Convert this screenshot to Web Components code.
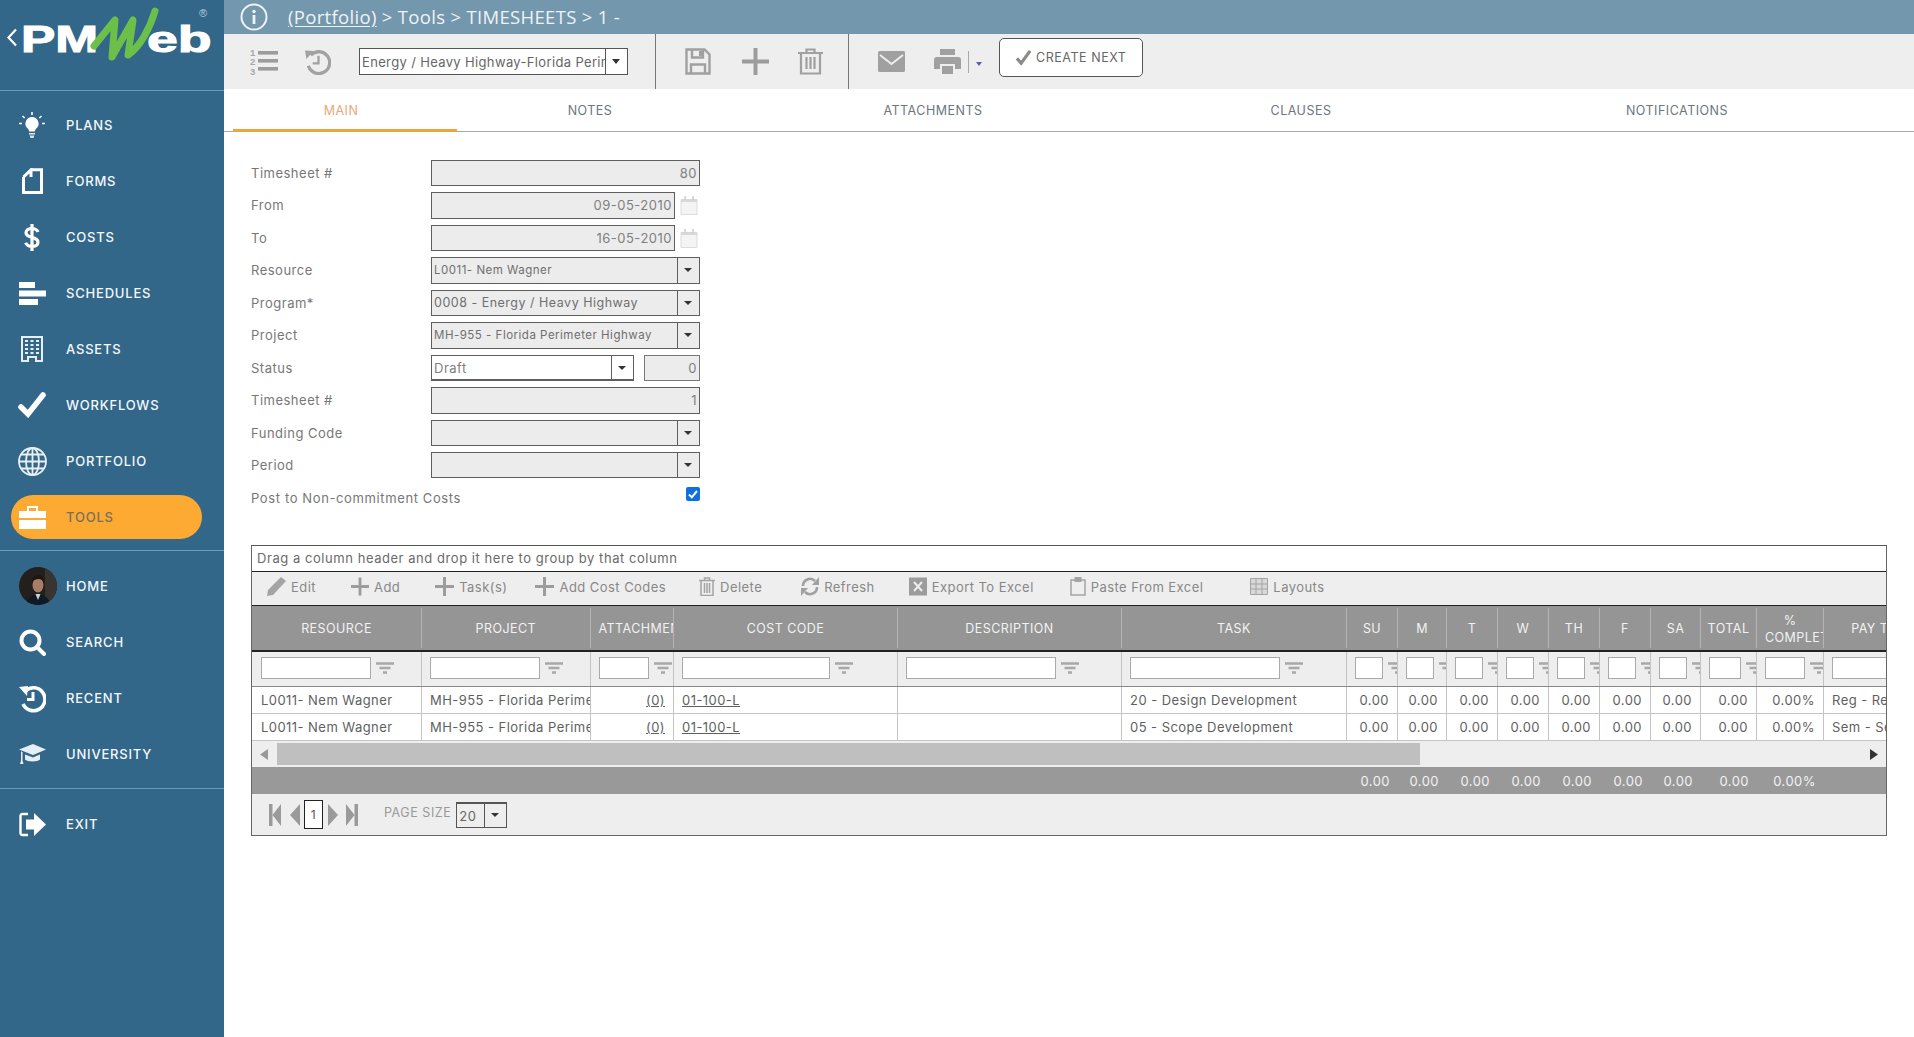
<!DOCTYPE html>
<html>
<head>
<meta charset="utf-8">
<title>Timesheets</title>
<style>
html,body{margin:0;padding:0;background:#fff;height:100%;overflow:hidden}
body{font-family:Inter,"Liberation Sans",sans-serif}
pm-app{height:1037px}
</style>
</head>
<body>
<pm-app></pm-app>
<script>
const ICONS = {
  plans:'<svg viewBox="0 0 26 26"><g stroke="#fff" stroke-width="1.6" fill="none"><path d="M13 0v3M3.5 4l2.2 2M22.5 4l-2.2 2M0 11.5h3M23 11.5h3"/></g><path fill="#fff" d="M13 5a6.6 6.6 0 0 0-4 11.8c.8.8 1 1.8 1 2.7h6c0-.9.2-1.9 1-2.7A6.6 6.6 0 0 0 13 5z"/><path fill="#dfe8ee" d="M10 21h6v1.5h-6zM10.6 23.4h4.8l-1 2.6h-2.8z"/></svg>',
  forms:'<svg viewBox="0 0 21 26"><path fill="none" stroke="#fff" stroke-width="3" d="M1.500 9 9 1.800V9M9 1.800h10.500v22.700h-18V9"/></svg>',
  costs:'<svg viewBox="0 0 18 27"><path fill="none" stroke="#fff" stroke-width="3.200" d="M15 8c-1-2.500-3-3.500-6-3.500-3.500 0-6 1.600-6 4.300 0 6 12 3.200 12 9.400 0 2.700-2.500 4.300-6 4.300-3.200 0-5.300-1.200-6.300-3.800M9 0v27"/></svg>',
  schedules:'<svg viewBox="0 0 27 23"><path fill="#fff" d="M0 0h16v6H0zM0 8.500h27v6H0zM0 17h19v6H0z"/></svg>',
  assets:'<svg viewBox="0 0 22 26"><path fill="#e8eff4" fill-rule="evenodd" d="M0 0h22v26H14v-4H8v4H0zM2 2v22h4v-4h10v4h4V2z"/><path fill="#e8eff4" d="M4 4h3v2H4zM9.500 4h3v2h-3zM15 4h3v2h-3zM4 8h3v2H4zM9.500 8h3v2h-3zM15 8h3v2h-3zM4 12h3v2H4zM9.500 12h3v2h-3zM15 12h3v2h-3zM4 16h3v2H4zM9.500 16h3v2h-3zM15 16h3v2h-3z"/></svg>',
  workflows:'<svg viewBox="0 0 28 26"><path fill="none" stroke="#fff" stroke-width="5.500" stroke-linecap="round" d="M3 15l7 7L25 3"/></svg>',
  portfolio:'<svg viewBox="0 0 29 29"><g fill="none" stroke="#e8eff4" stroke-width="1.800"><circle cx="14.500" cy="14.500" r="13.500"/><ellipse cx="14.500" cy="14.500" rx="6.500" ry="13.500"/><path d="M14.500 1v27M1 14.500h27M3 7.500h23M3 21.500h23"/></g></svg>',
  tools:'<svg viewBox="0 0 27 24"><path fill="#fff" d="M0 6h27v7H0zM0 15h27v9H0z"/><path fill="none" stroke="#fff" stroke-width="2" d="M9 6V2h9v4"/></svg>',
  search:'<svg viewBox="0 0 27 27"><circle cx="11.500" cy="11.500" r="9" fill="none" stroke="#fff" stroke-width="4"/><path stroke="#fff" stroke-width="4" stroke-linecap="round" d="M18 18l7 7"/></svg>',
  recent:'<svg viewBox="0 0 27 30"><path fill="none" stroke="#fff" stroke-width="3.600" d="M6.500 8A11.500 11.500 0 1 1 4 21"/><path fill="#fff" d="M0 4l9-1-1 10z"/><path fill="none" stroke="#fff" stroke-width="3" d="M14 9v7.500H8"/></svg>',
  university:'<svg viewBox="0 0 27 20"><path fill="#e8eff4" d="M0 5.500 14 0l13 5.500L14 11zM6 10.500l8 3 7-3v5c-2 2.500-13 2.500-15 0zM2 7.500l1.500.6v8.400l1 3.500H1l1-3.500z"/></svg>',
  exit:'<svg viewBox="0 0 27 25"><path fill="none" stroke="#fff" stroke-width="2.400" d="M9 2H3.500A1.800 1.800 0 0 0 1.500 4v17a1.800 1.800 0 0 0 2 2H9"/><path fill="#fff" d="M7 7.500h8V1l12 11.500L15 24v-6.500H7z"/></svg>',
  numbered:'<svg viewBox="0 0 28 27"><g fill="#9c9c9c"><rect x="8" y="3" width="20" height="3.600"/><rect x="8" y="11" width="20" height="3.600"/><rect x="8" y="19" width="20" height="3.600"/></g><g fill="#a8a8a8" font-family="Liberation Sans" font-size="9.500" font-weight="700"><text x="0" y="8">1</text><text x="0" y="17">2</text><text x="0" y="27">3</text></g></svg>',
  history:'<svg viewBox="0 0 27 27"><path fill="none" stroke="#a2a2a2" stroke-width="3.400" d="M6 7a11.300 11.300 0 1 1-2.500 11"/><path fill="#a2a2a2" d="M0 2l9 .5L1.500 11z"/><path fill="none" stroke="#a2a2a2" stroke-width="2.400" d="M14 7.500v8H8"/></svg>',
  save:'<svg viewBox="0 0 26 27"><path fill="none" stroke="#a0a0a0" stroke-width="2.400" d="M1.500 1.500h18l5 5v19h-23zM7 1.500v8h11v-8M6 25.500v-9h14v9"/><path fill="#a0a0a0" d="M14 3h3v5h-3z"/></svg>',
  plus:'<svg viewBox="0 0 27 27"><path fill="#9c9c9c" d="M11.500 0h4v11.500H27v4H15.500V27h-4V15.500H0v-4h11.500z"/></svg>',
  trash:'<svg viewBox="0 0 25 27"><path fill="none" stroke="#a0a0a0" stroke-width="2.200" d="M0 5h25M8.500 5V1.500h8V5M3 5v20.500h19V5M8.500 9v12M12.500 9v12M16.500 9v12"/></svg>',
  mail:'<svg viewBox="0 0 27 21"><rect width="27" height="21" rx="1.500" fill="#a0a0a0"/><path fill="none" stroke="#eee" stroke-width="2" d="M2 4l11.500 9L25 4"/></svg>',
  print:'<svg viewBox="0 0 27 25"><path fill="#a0a0a0" d="M6 0h15v6H6zM3 8h21a3 3 0 0 1 3 3v9h-6v-5H6v5H0v-9a3 3 0 0 1 3-3zM8 17h11v8H8z"/></svg>',
  check:'<svg viewBox="0 0 18 18"><path fill="none" stroke="#8a8a8a" stroke-width="3.400" d="M2 10l4.500 5L16 2"/></svg>',
  cal:'<svg viewBox="0 0 18 19"><path fill="#f4f4f4" stroke="#dcdcdc" d="M1 3.500h16v15H1z"/><path stroke="#d8d8d8" stroke-width="3" d="M1 4.500h16"/><path stroke="#ccc" stroke-width="1.500" d="M5 0v4M13 0v4"/></svg>',
  edit:'<svg viewBox="0 0 19 19"><path fill="#a4a4a4" d="M14 0l5 4L6 18l-6 1 1-6z"/></svg>',
  gplus:'<svg viewBox="0 0 19 19"><path fill="#9c9c9c" d="M8 0h3v8h8v3h-8v8H8v-8H0V8h8z"/></svg>',
  gtrash:'<svg viewBox="0 0 16 19"><path fill="none" stroke="#a4a4a4" stroke-width="1.500" d="M0 3.500h16M5.500 3.500V1h5v2.500M2 3.500v15h12v-15M5.500 6v10M8 6v10M10.500 6v10"/></svg>',
  refresh:'<svg viewBox="0 0 18 19"><path fill="none" stroke="#a0a0a0" stroke-width="2.600" d="M2 9a7 7 0 0 1 12-5M16 10a7 7 0 0 1-12 5"/><path fill="#a0a0a0" d="M18 0v8h-7zM0 19v-8h7z"/></svg>',
  excel:'<svg viewBox="0 0 18 18"><rect width="18" height="18" fill="#9c9c9c"/><path stroke="#eee" stroke-width="2" d="M5 4.500l8 9M13 4.500l-8 9"/></svg>',
  paste:'<svg viewBox="0 0 16 19"><path fill="none" stroke="#a4a4a4" stroke-width="1.500" d="M1 3h14v15H1z"/><path fill="#a4a4a4" d="M4.500 0h7v5h-7z"/></svg>',
  layouts:'<svg viewBox="0 0 18 17"><path fill="#d8d8d8" stroke="#a4a4a4" d="M.5.5h17v16H.5z"/><path stroke="#a4a4a4" d="M6 .5v16M12 .5v16M.5 6h17M.5 11h17"/></svg>',
  filter:'<svg viewBox="0 0 18 13"><path stroke="#a8a8a8" stroke-width="2.400" fill="none" d="M0 1.500h18M3.500 6h11M7 10.500h4"/></svg>',
  first:'<svg viewBox="0 0 12 22"><path fill="#9a9a9a" d="M0 0h3.500v22H0zM12 0v22L3.500 11z"/></svg>',
  prev:'<svg viewBox="0 0 10 22"><path fill="#9a9a9a" d="M10 0v22L0 11z"/></svg>',
  next:'<svg viewBox="0 0 10 22"><path fill="#9a9a9a" d="M0 0v22l10-11z"/></svg>',
  last:'<svg viewBox="0 0 12 22"><path fill="#9a9a9a" d="M12 0H8.500v22H12zM0 0v22l8.500-11z"/></svg>'
};

// inner markup of an icon, for use in an <svg> of another size
const inner = name => ICONS[name].replace(/^<svg ([^>]*)>/, '').replace('</svg>', '');
const viewBox = name => ICONS[name].match(/viewBox="([^"]+)"/)[1];

class PmLogo extends HTMLElement {
  constructor() {
    super();
    this.attachShadow({ mode: 'open' });
    this.shadowRoot.innerHTML = `
      <style>
      :host{display:block;height:90px;position:relative;border-bottom:1px solid #6f9ab5;color:#fff;font-family:"Liberation Sans",sans-serif;font-weight:700}
      .row{display:flex;padding:20px 0 0 21px;font-size:36px;line-height:40px;-webkit-text-stroke:1px #fff}
      .pm{display:block;width:54px;transform:scaleX(1.43);transform-origin:left}
      .eb{display:block;width:40px;margin-left:72px;transform:scaleX(1.54);transform-origin:left}
      svg{position:absolute;left:0;top:0}
      .r{position:absolute;left:199px;top:7px;font-size:11px;font-weight:400;color:#b9cfdd}
      </style>
      <div class="row"><span class="pm">PM</span><span class="eb">eb</span></div>
      <svg width="170" height="66" viewBox="0 0 170 66"><path fill="none" stroke="#fff" stroke-width="2.200" d="M16 29.500 8.500 37.500 16 45.500"/>
        <path fill="none" stroke="#6cc04a" stroke-width="7" stroke-linejoin="round" stroke-linecap="round" d="M94 46 115 20 112 57 133 20 128 55C140 47 150 28 155 11"/></svg>
      <span class="r">®</span>
    `;
  }
}
customElements.define('pm-logo', PmLogo);

class PmNavItem extends HTMLElement {
  constructor() {
    super();
    this.attachShadow({ mode: 'open' });
    this.shadowRoot.innerHTML = `
      <style>
      :host{display:flex;align-items:center;height:56px}
      .pill{flex:1;height:44px;margin:0 22px 0 11px;border-radius:22px;display:flex;align-items:center;position:relative;padding-left:55px;
        font:500 13px Inter,"Liberation Sans",sans-serif;letter-spacing:.8px;color:#f4f8fa;text-transform:uppercase}
      :host([active]) .pill{background:#fdaa33;color:#77705f}
      .ico{position:absolute;left:5px;top:6px;width:32px;height:32px;display:flex;align-items:center;justify-content:center}
      .ico svg{display:block}
      .av{width:38px;height:38px;border-radius:50%;overflow:hidden;display:block;flex:none}
      </style>
      <div class="pill"><span class="ico"></span><span class="lbl"></span></div>
    `;
  }
  connectedCallback() {
    this.shadowRoot.querySelector('.lbl').textContent = this.getAttribute('label');
    const ico = this.shadowRoot.querySelector('.ico');
    const name = this.getAttribute('icon');
    if (name === 'avatar') {
      ico.style.left = '11px';
      ico.innerHTML = '<svg class="av" viewBox="0 0 38 38"><rect width="38" height="38" fill="#231f1c"/><rect x="26" width="12" height="38" fill="#38342f"/><path fill="#0f1a26" d="M7 38c1-8 6-10 12-11 6 1 11 3 12 11z"/><path fill="#cdd3d6" d="M16.500 27h5L19 33z"/><ellipse cx="19" cy="18" rx="5.500" ry="7.500" fill="#a87c66"/><path fill="#1d1612" d="M13 16c0-6 3-8 6.500-8s5.500 3 5.500 8c-1-3-3-4-5.500-4s-5.500 1-6.500 4z"/></svg>';
      return;
    }
    ico.innerHTML = ICONS[name];
    const svg = ico.querySelector('svg');
    const box = svg.getAttribute('viewBox').split(' ');
    svg.setAttribute('width', box[2]);
    svg.setAttribute('height', box[3]);
  }
}
customElements.define('pm-nav-item', PmNavItem);

class PmSidebar extends HTMLElement {
  constructor() {
    super();
    this.attachShadow({ mode: 'open' });
    this.shadowRoot.innerHTML = `
      <style>
      :host{display:block;width:224px;flex:none;background:#336789;height:100%}
      </style>
      <slot></slot>
    `;
  }
}
customElements.define('pm-sidebar', PmSidebar);

class PmTopbar extends HTMLElement {
  constructor() {
    super();
    this.attachShadow({ mode: 'open' });
    this.shadowRoot.innerHTML = `
      <style>
      :host{display:flex;align-items:center;height:34px;background:#7397ad;color:#eef3f6;padding-left:16px;
        font:400 18.500px "Open Sans",sans-serif;letter-spacing:.32px;white-space:nowrap}
      svg{margin-right:20px;flex:none}
      span{padding-bottom:2px}
      u{text-underline-offset:2px}
      </style>
      <svg width="28" height="28" viewBox="0 0 28 28"><circle cx="14" cy="14" r="12.500" fill="none" stroke="#eef3f6" stroke-width="2"/><circle cx="14" cy="8.500" r="1.700" fill="#eef3f6"/><rect x="12.600" y="12" width="2.800" height="9" fill="#eef3f6"/></svg>
      <span><u>(Portfolio)</u> &gt; Tools &gt; TIMESHEETS &gt; 1 -</span>
    `;
  }
}
customElements.define('pm-topbar', PmTopbar);

class PmToolbar extends HTMLElement {
  constructor() {
    super();
    this.attachShadow({ mode: 'open' });
    this.shadowRoot.innerHTML = `
      <style>
      :host{display:flex;align-items:center;height:55px;background:#eeeeee;box-sizing:border-box;padding-left:26px;font-family:Inter,"Liberation Sans",sans-serif}
      .i{display:block;flex:none}
      .i svg{display:block;width:100%;height:100%}
      .sel{display:flex;width:269px;height:27px;box-sizing:border-box;border:1px solid #555;background:#fff;margin-left:28px;flex:none}
      .sel span{flex:1;font-size:13px;letter-spacing:.35px;color:#666;line-height:26px;padding-left:2px;overflow:hidden;white-space:nowrap}
      .sel b{width:21px;border-left:1px solid #555;position:relative}
      .sel b::after{content:"";position:absolute;left:6px;top:10px;border:4px solid transparent;border-top:5px solid #333;border-bottom:0}
      .sep{width:1px;align-self:stretch;background:#777;flex:none}
      .line{width:1px;height:22px;background:#aaa;margin-left:7px;flex:none}
      .car{width:0;height:0;border:3.500px solid transparent;border-top:4px solid #4e6a9c;border-bottom:0;margin:4px 0 0 7px;flex:none}
      .btn{display:flex;align-items:center;box-sizing:border-box;width:144px;height:39px;margin:-8px 0 0 17px;padding-left:15px;border:1px solid #555;border-radius:5px;background:#fff;
        font-size:12.500px;letter-spacing:.55px;color:#666;flex:none}
      .btn svg{margin-right:4px}
      </style>
      <span class="i" style="width:28px;height:27px">${ICONS.numbered}</span>
      <span class="i" style="margin-left:27px;width:26px;height:27px">${ICONS.history}</span>
      <div class="sel"><span>Energy / Heavy Highway-Florida Perimeter Highway</span><b></b></div>
      <div class="sep" style="margin-left:27px"></div>
      <span class="i" style="margin-left:29px;width:26px;height:27px">${ICONS.save}</span>
      <span class="i" style="margin-left:31px;width:27px;height:27px">${ICONS.plus}</span>
      <span class="i" style="margin-left:29px;width:25px;height:27px">${ICONS.trash}</span>
      <div class="sep" style="margin-left:25px"></div>
      <span class="i" style="margin-left:29px;width:27px;height:21px">${ICONS.mail}</span>
      <span class="i" style="margin-left:29px;width:27px;height:25px">${ICONS.print}</span>
      <div class="line"></div><div class="car"></div>
      <div class="btn"><svg width="17" height="17" viewBox="0 0 18 18">${inner('check')}</svg>CREATE NEXT</div>
    `;
  }
}
customElements.define('pm-toolbar', PmToolbar);

class PmTabs extends HTMLElement {
  constructor() {
    super();
    this.attachShadow({ mode: 'open' });
    const tabs = [['MAIN',224],['NOTES',266],['ATTACHMENTS',420],['CLAUSES',316],['NOTIFICATIONS',436]];
    this.shadowRoot.innerHTML = `
      <style>
      :host{display:flex;height:43px;box-sizing:border-box;border-bottom:1px solid #a9a9a9;padding-left:9px;font:400 12.500px Inter,"Liberation Sans",sans-serif;letter-spacing:.5px;color:#6b7680}
      div{display:flex;align-items:center;justify-content:center;height:43px;box-sizing:border-box;padding:0 0 1px 0;flex:none}
      .on{color:#eaa877;border-bottom:3px solid #eba73f;padding:2px 8px 0 0;height:43px}
      </style>
      ${tabs.map((t, i) => `<div class="${i ? '' : 'on'}" style="width:${t[1]}px">${t[0]}</div>`).join('')}
    `;
  }
}
customElements.define('pm-tabs', PmTabs);

class PmField extends HTMLElement {
  constructor() {
    super();
    this.attachShadow({ mode: 'open' });
    this.shadowRoot.innerHTML = `
      <style>
      :host{display:flex;height:26.450px;margin-bottom:6px;font-family:Inter,"Liberation Sans",sans-serif;letter-spacing:.5px}
      label{width:180px;flex:none;font-size:13px;color:#777;line-height:26px}
      .w{flex:none;width:269px;display:flex;align-items:center;height:100%}
      .box{flex:1;display:flex;box-sizing:border-box;height:100%;border:1px solid #5e5e5e;background:#ececec;min-width:0}
      .box span{flex:1;line-height:24px;padding:0 2px;font-size:13px;color:#808080;white-space:nowrap;overflow:hidden}
      :host([num]) .box span,:host([date]) .box span{text-align:right}
      :host([small]) .box span{font-size:11.500px;color:#6f6f6f}
      :host([mid]) .box span{font-size:12.500px;color:#6f6f6f}
      :host([white]) .box{background:#fff;border-bottom-width:2px}
      b{width:21px;flex:none;border-left:1px solid #5e5e5e;position:relative;background:#ececec}
      :host([white]) b{background:#fff}
      b::after{content:"";position:absolute;left:6px;top:10px;border:4px solid transparent;border-top:4.500px solid #333;border-bottom:0}
      .cal{flex:none;width:18px;height:19px;margin:0 2px 0 5px}
      .extra{flex:none;box-sizing:border-box;width:56px;height:100%;margin-left:10px;border:1px solid #777;background:#ececec;text-align:right;padding-right:2px;font-size:13px;line-height:24px;color:#808080}
      </style>
      <label></label><div class="w"><div class="box"><span></span></div></div>
    `;
  }
  connectedCallback() {
    const root = this.shadowRoot;
    root.querySelector('label').textContent = this.getAttribute('label');
    root.querySelector('.box span').textContent = this.getAttribute('value') || '';
    const wrap = root.querySelector('.w');
    if (this.hasAttribute('select')) root.querySelector('.box').insertAdjacentHTML('beforeend', '<b></b>');
    if (this.hasAttribute('date')) wrap.insertAdjacentHTML('beforeend', `<span class="cal">${ICONS.cal}</span>`);
    if (this.hasAttribute('extra')) wrap.insertAdjacentHTML('beforeend', `<span class="extra">${this.getAttribute('extra')}</span>`);
  }
}
customElements.define('pm-field', PmField);

class PmForm extends HTMLElement {
  constructor() {
    super();
    this.attachShadow({ mode: 'open' });
    this.shadowRoot.innerHTML = `
      <style>
      :host{display:block;padding:28px 0 0 27px;height:413px;box-sizing:border-box}
      .post{display:flex;width:449px;justify-content:space-between;font:13px Inter,"Liberation Sans",sans-serif;letter-spacing:.62px;color:#777;height:28px}
      .post span{line-height:28px}
      .chk{width:14px;height:14px;background:#0f6fde;border-radius:2px;margin-top:3px;display:block}
      </style>
      <slot></slot>
      <div class="post"><span>Post to Non-commitment Costs</span>
        <svg class="chk" viewBox="0 0 14 14"><path fill="none" stroke="#fff" stroke-width="2" d="M3 7.500l2.800 2.800L11 4"/></svg></div>
    `;
  }
}
customElements.define('pm-form', PmForm);

const COLS = [
  {t:'RESOURCE',w:170,f:110,fg:5},{t:'PROJECT',w:168.500,f:110,fg:5},{t:'ATTACHMENTS',w:83.500,f:50,fg:5,clip:1},
  {t:'COST CODE',w:224,f:148,fg:5},{t:'DESCRIPTION',w:224,f:150,fg:5},{t:'TASK',w:225,f:150,fg:5},
  {t:'SU',w:51,f:28,fg:5},{t:'M',w:49,f:28,fg:5},{t:'T',w:51,f:28,fg:5},{t:'W',w:51,f:28,fg:5},
  {t:'TH',w:51,f:28,fg:5},{t:'F',w:51,f:28,fg:5},{t:'SA',w:50,f:28,fg:5},{t:'TOTAL',w:56,f:32,fg:5},
  {t:'% COMPLETE',w:67,f:40,fg:5,clip:1},{t:'PAY TYPE',w:118,f:100,fg:0}
];
const TEMPLATE = COLS.map(c => c.w + 'px').join(' ');
const ROWS = [
  ['L0011- Nem Wagner','MH-955 - Florida Perimeter Highway','(0)','01-100-L','','20 - Design Development','0.00','0.00','0.00','0.00','0.00','0.00','0.00','0.00','0.00%','Reg - Regular'],
  ['L0011- Nem Wagner','MH-955 - Florida Perimeter Highway','(0)','01-100-L','','05 - Scope Development','0.00','0.00','0.00','0.00','0.00','0.00','0.00','0.00','0.00%','Sem - Semi']
];
const ACTIONS = [
  ['edit',19,'Edit',35],['gplus',18,'Add',35],['gplus',19,'Task(s)',28],['gplus',19,'Add Cost Codes',33],
  ['gtrash',16,'Delete',39],['refresh',18,'Refresh',34],['excel',18,'Export To Excel',36],['paste',16,'Paste From Excel',47],['layouts',18,'Layouts',0]
];

class PmGrid extends HTMLElement {
  constructor() {
    super();
    this.attachShadow({ mode: 'open' });
    const right = new Set([2,6,7,8,9,10,11,12,13,14]);
    const cell = (v, i) => {
      const link = i === 2 || i === 3;
      const text = link ? `<u>${v}</u>` : v;
      return `<div class="td${right.has(i) ? ' r' : ''}">${text}</div>`;
    };
    this.shadowRoot.innerHTML = `
      <style>
      :host{display:block;width:1636px;margin-left:27px;box-sizing:border-box;border:1px solid #666;border-top-color:#555;
        font:13px Inter,"Liberation Sans",sans-serif;letter-spacing:.45px;color:#666}
      .group{height:25px;line-height:24px;padding-left:5px;color:#6a6a6a;border-bottom:1px solid #222;letter-spacing:.55px}
      .acts{height:33px;box-sizing:content-box;background:#eeeeee;border-bottom:1px solid #222;display:flex;align-items:flex-start;color:#888;padding-left:15px}
      .a{display:flex;align-items:center;white-space:nowrap;height:29px}
      .a svg{display:block;margin-right:5px;flex:none}
      .row{display:grid;grid-template-columns:${TEMPLATE};overflow:hidden;width:1634px}
      .head{height:46px;background:#959595;color:#f2f2f2;border-bottom:2px solid #222;box-sizing:border-box;font-size:12.500px}
      .th{display:flex;align-items:center;justify-content:center;text-align:center;overflow:hidden;border-right:1px solid #b4b4b4;margin:2px 0;padding-top:1px;line-height:17px;white-space:nowrap;box-sizing:border-box}
      .th.clip{justify-content:flex-start}
      .th.clip span{display:block;flex:none;width:100%;box-sizing:border-box;padding:0 8px;text-align:center;white-space:normal}
      .th.first-line span{white-space:nowrap;text-align:left}
      .filters{height:35px;background:#eeeeee;border-bottom:1px solid #888;box-sizing:border-box}
      .fc{border-right:1px solid #c2c2c2;display:flex;align-items:flex-start;overflow:hidden;padding:5px 0 0 8px;box-sizing:border-box}
      .fc:first-child{padding-left:9px}
      .fc i{display:block;height:22px;box-sizing:border-box;border:1px solid #aaa;background:#fff;flex:none}
      .fc svg{flex:none;display:block;margin-top:5px}
      .data{height:27px;background:#fff;border-bottom:1px solid #c4c4c4;box-sizing:border-box;color:#5f5f5f}
      .td{line-height:27px;padding:0 8px;white-space:nowrap;overflow:hidden;border-right:1px solid #c4c4c4;box-sizing:border-box}
      .td:first-child{padding-left:9px}
      .td.r{text-align:right}
      .scroll{height:26px;background:#eeeeee;position:relative;display:flex;align-items:center}
      .thumb{position:absolute;left:25px;top:2px;bottom:2px;width:1143px;background:#bfbfbf}
      .scroll svg{position:absolute;top:8px}
      .foot{height:27px;background:#999;color:#f2f2f2}
      .foot .td{border:0;line-height:28px}
      .pager{height:41px;background:#eeeeee;display:flex;align-items:center;padding-left:17px}
      .pager svg{display:block;flex:none}
      .pg{box-sizing:border-box;width:19px;height:29px;border:1px solid #222;background:#fff;text-align:center;line-height:28px;margin:0 5px 0 4px;color:#555;font-size:12px}
      .ps{margin:-4px 5px 0 26px;font-size:12.500px;color:#999;letter-spacing:.55px}
      .pz{display:flex;box-sizing:border-box;width:51px;height:26px;border:1px solid #555;border-top-width:2px;background:#eeeeee;color:#666}
      .pz span{flex:1;line-height:25px;padding-left:2px}
      .pz b{width:21px;border-left:1px solid #555;position:relative}
      .pz b::after{content:"";position:absolute;left:6px;top:9px;border:4px solid transparent;border-top:4.500px solid #333;border-bottom:0}
      </style>
      <div class="group">Drag a column header and drop it here to group by that column</div>
      <div class="acts">${ACTIONS.map(a => `<span class="a" style="margin-right:${a[3]}px"><svg width="${a[1]}" height="19" viewBox="${viewBox(a[0])}">${inner(a[0])}</svg>${a[2]}</span>`).join('')}</div>
      <div class="row head">${COLS.map(c => c.clip
        ? `<div class="th clip${c.t === 'ATTACHMENTS' ? ' first-line' : ''}"><span>${c.t}</span></div>`
        : `<div class="th">${c.t}</div>`).join('')}</div>
      <div class="row filters">${COLS.map(c => `<div class="fc"><i style="width:${c.f}px"></i><svg width="18" height="13" viewBox="0 0 18 13" style="margin-left:${c.fg}px">${c.fg ? inner('filter') : ''}</svg></div>`).join('')}</div>
      ${ROWS.map(r => `<div class="row data">${r.map(cell).join('')}</div>`).join('')}
      <div class="scroll"><svg width="8" height="11" viewBox="0 0 8 11" style="left:8px"><path fill="#999" d="M8 0v11L0 5.500z"/></svg>
        <div class="thumb"></div><svg width="8" height="11" viewBox="0 0 8 11" style="left:1618px"><path fill="#333" d="M0 0v11l8-5.500z"/></svg></div>
      <div class="row foot">${COLS.map((c, i) => `<div class="td${right.has(i) ? ' r' : ''}">${i >= 6 && i <= 14 ? ROWS[0][i] : ''}</div>`).join('')}</div>
      <div class="pager">
        <span style="width:12px;height:22px">${ICONS.first}</span><span style="width:10px;height:22px;margin-left:9px">${ICONS.prev}</span>
        <div class="pg">1</div>
        <span style="width:10px;height:22px">${ICONS.next}</span><span style="width:12px;height:22px;margin-left:8px">${ICONS.last}</span>
        <span class="ps">PAGE SIZE</span>
        <div class="pz"><span>20</span><b></b></div>
      </div>
    `;
  }
}
customElements.define('pm-grid', PmGrid);

class PmApp extends HTMLElement {
  constructor() {
    super();
    this.attachShadow({ mode: 'open' });
    this.shadowRoot.innerHTML = `
      <style>
      :host{display:flex;width:1914px}
      main{flex:1;min-width:0;display:block}
      </style>
      <pm-sidebar>
        <pm-logo></pm-logo>
        <div style="height:6px"></div>
        <pm-nav-item label="Plans" icon="plans"></pm-nav-item>
        <pm-nav-item label="Forms" icon="forms"></pm-nav-item>
        <pm-nav-item label="Costs" icon="costs"></pm-nav-item>
        <pm-nav-item label="Schedules" icon="schedules"></pm-nav-item>
        <pm-nav-item label="Assets" icon="assets"></pm-nav-item>
        <pm-nav-item label="Workflows" icon="workflows"></pm-nav-item>
        <pm-nav-item label="Portfolio" icon="portfolio"></pm-nav-item>
        <pm-nav-item label="Tools" icon="tools" active></pm-nav-item>
        <div style="height:5px"></div><hr style="border:0;border-top:1px solid #6f9ab5;margin:0">
        <div style="height:7px"></div>
        <pm-nav-item label="Home" icon="avatar"></pm-nav-item>
        <pm-nav-item label="Search" icon="search"></pm-nav-item>
        <pm-nav-item label="Recent" icon="recent"></pm-nav-item>
        <pm-nav-item label="University" icon="university"></pm-nav-item>
        <div style="height:6px"></div><hr style="border:0;border-top:1px solid #6f9ab5;margin:0">
        <div style="height:7px"></div>
        <pm-nav-item label="Exit" icon="exit"></pm-nav-item>
      </pm-sidebar>
      <main>
        <pm-topbar></pm-topbar>
        <pm-toolbar></pm-toolbar>
        <pm-tabs></pm-tabs>
        <pm-form>
          <pm-field label="Timesheet #" value="80" num></pm-field>
          <pm-field label="From" value="09-05-2010" date></pm-field>
          <pm-field label="To" value="16-05-2010" date></pm-field>
          <pm-field label="Resource" value="L0011- Nem Wagner" select small></pm-field>
          <pm-field label="Program*" value="0008 - Energy / Heavy Highway" select mid></pm-field>
          <pm-field label="Project" value="MH-955 - Florida Perimeter Highway" select small></pm-field>
          <pm-field label="Status" value="Draft" select white extra="0"></pm-field>
          <pm-field label="Timesheet #" value="1" num></pm-field>
          <pm-field label="Funding Code" select></pm-field>
          <pm-field label="Period" select></pm-field>
        </pm-form>
        <pm-grid></pm-grid>
      </main>
    `;
  }
}
customElements.define('pm-app', PmApp);
</script>
</body>
</html>
